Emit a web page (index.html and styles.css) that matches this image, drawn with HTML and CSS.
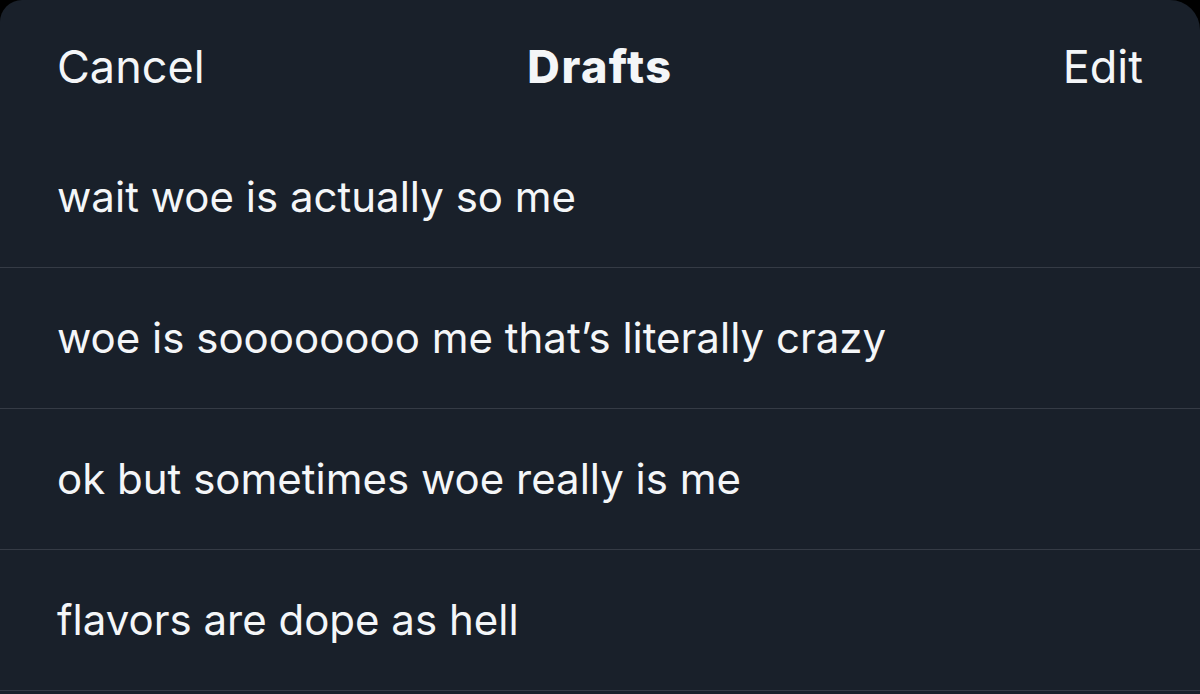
FILE: index.html
```html
<!DOCTYPE html>
<html>
<head>
<meta charset="utf-8">
<link rel="stylesheet" href="styles.css">
</head>
<body>
<div class="sheet">
  <header class="bar">
    <span class="bar-btn">Cancel</span>
    <span class="bar-title">Drafts</span>
    <span class="bar-btn">Edit</span>
  </header>
  <ul class="drafts">
    <li class="draft">wait woe is actually so me</li>
    <li class="draft">woe is soooooooo me that’s literally crazy</li>
    <li class="draft">ok but sometimes woe really is me</li>
    <li class="draft">flavors are dope as hell</li>
  </ul>
</div>
</body>
</html>
```

FILE: styles.css
```css
html, body {
  margin: 0;
  padding: 0;
  background: #000;
  width: 1200px;
  height: 694px;
  overflow: hidden;
}
.sheet {
  width: 1200px;
  height: 694px;
  background: #19202a;
  border-radius: 22px 30px 0 0;
  color: #f4f6f8;
  font-family: "Inter", "Liberation Sans", sans-serif;
  display: flex;
  flex-direction: column;
}
.bar {
  height: 127px;
  display: flex;
  align-items: center;
  justify-content: space-between;
  padding: 6px 57px 0 57px;
  box-sizing: border-box;
}
.bar-btn {
  font-size: 45px;
  font-weight: 400;
  width: 220px;
}
.bar-btn:last-child { text-align: right; }
.bar-title {
  font-size: 45px;
  font-weight: 800;
  letter-spacing: 1.5px;
}
.drafts {
  list-style: none;
  margin: 0;
  padding: 0;
}
.draft {
  height: 141px;
  display: flex;
  align-items: center;
  padding: 0 57px;
  font-size: 42px;
  border-bottom: 1px solid #353b45;
  padding-bottom: 2px;
  box-sizing: border-box;
}
```
